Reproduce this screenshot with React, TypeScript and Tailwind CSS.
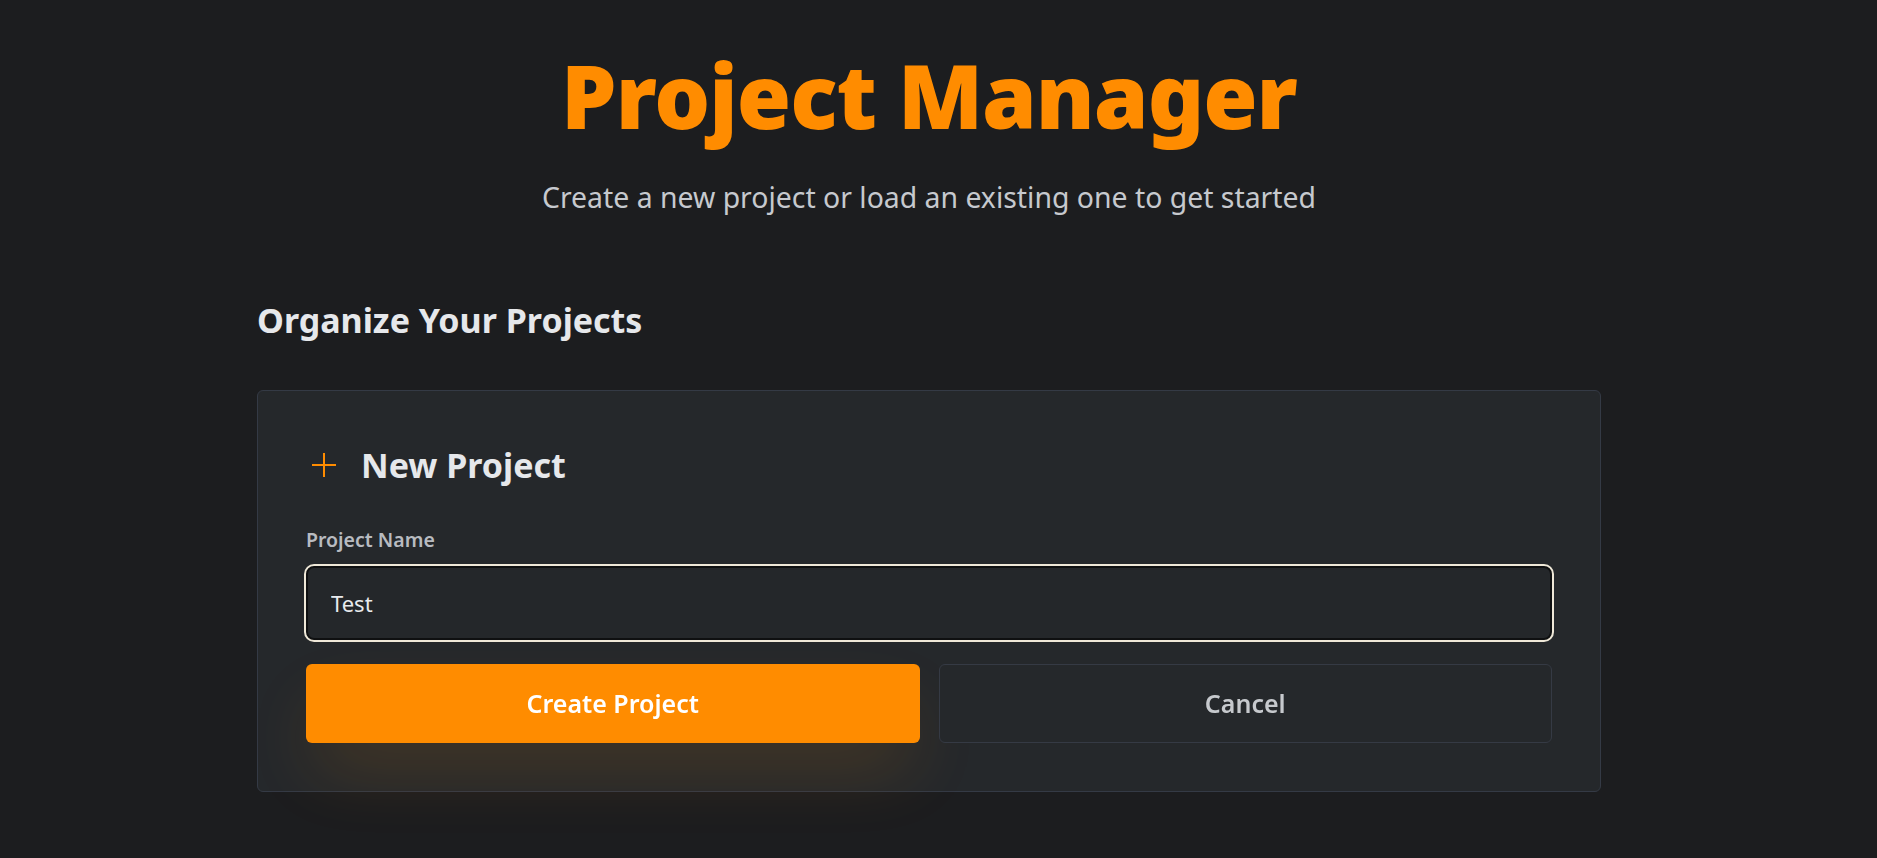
import { useState } from 'react';

function PlusIcon() {
  return (
    <svg width="24" height="24" viewBox="0 0 24 24" fill="none" stroke="#ff8c00" strokeWidth="2" className="shrink-0">
      <path d="M12 0v24M0 12h24" />
    </svg>
  );
}

export default function App() {
  const [name, setName] = useState('Test');

  return (
    <div className="min-h-screen bg-[#1c1d1f] font-['Noto_Sans',sans-serif] pr-[19px]">
      <div className="w-[1344px] mx-auto pt-[51px] pb-16">
        {/* Header */}
        <h1 className="text-center text-[88px] leading-none font-black text-[#ff8c00] tracking-[-1px]">
          Project Manager
        </h1>
        <p className="text-center text-[28.4px] leading-none text-[#c6c9ce] mt-[44px]">
          Create a new project or load an existing one to get started
        </p>

        <h2 className="text-[34px] leading-none font-bold text-[#e6e8eb] mt-[92px]">
          Organize Your Projects
        </h2>

        {/* New project card */}
        <div className="mt-[53px] rounded-md border border-[#343a45] bg-[#25282b] px-12 pt-[57px] pb-12">
          <div className="flex items-center h-[34px]">
            <div className="ml-[6px]">
              <PlusIcon />
            </div>
            <h3 className="ml-[25px] text-[34px] leading-none font-bold text-[#e6e8eb]">New Project</h3>
          </div>

          <label className="block mt-[48px] text-[19.5px] leading-none font-semibold text-[#b8bbc0]">
            Project Name
          </label>
          <input
            autoFocus
            value={name}
            onChange={(e) => setName(e.target.value)}
            className="block w-full mt-4 h-[74px] rounded-lg border-2 border-[#0f1011] bg-[#24272a] px-[23px] text-[22px] text-[#e8eaed] caret-[#e8eaed] shadow-[0_0_0_2px_#efe8d8] outline-none"
          />

          <div className="grid grid-cols-2 gap-[19px] mt-6">
            <button className="h-[79px] rounded-md bg-[#ff8c00] text-[25px] font-semibold text-white shadow-[0_34px_70px_-10px_rgba(255,140,0,0.16)]">
              Create Project
            </button>
            <button className="h-[79px] rounded-md border border-[#353a44] bg-[#25282b] text-[25px] font-semibold text-[#c6c9cd]">
              Cancel
            </button>
          </div>
        </div>
      </div>
    </div>
  );
}
